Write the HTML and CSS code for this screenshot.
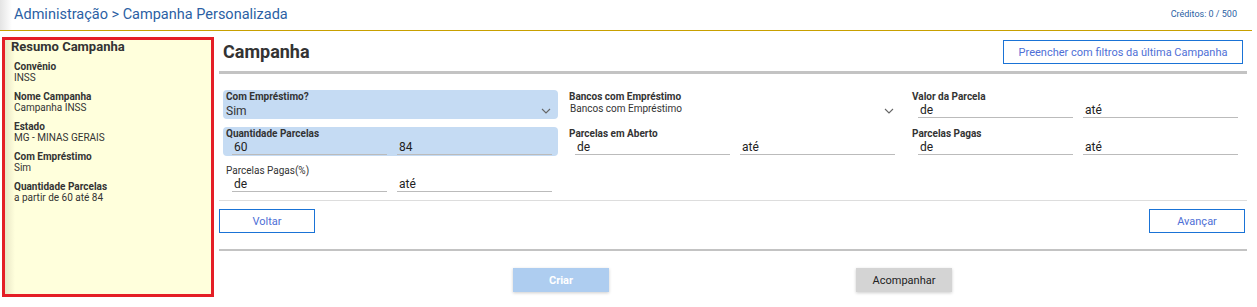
FILE: index.html
```html
<!DOCTYPE html>
<html lang="pt-BR">
<head>
  <meta charset="UTF-8">
  <title>Campanha Personalizada</title>
  <link rel="stylesheet" href="styles.css">
</head>
<body>
  <!-- Barra superior -->
  <div class="topbar">
    <span class="breadcrumb">Administração &gt; Campanha Personalizada</span>
    <span class="creditos">Créditos: 0 / 500</span>
  </div>

  <div class="page">
    <!-- Resumo lateral -->
    <aside class="resumo">
      <h3>Resumo Campanha</h3>
      <div class="resumo-item"><b>Convênio</b><span>INSS</span></div>
      <div class="resumo-item"><b>Nome Campanha</b><span>Campanha INSS</span></div>
      <div class="resumo-item"><b>Estado</b><span>MG - MINAS GERAIS</span></div>
      <div class="resumo-item"><b>Com Empréstimo</b><span>Sim</span></div>
      <div class="resumo-item"><b>Quantidade Parcelas</b><span>a partir de 60 até 84</span></div>
    </aside>

    <main class="main">
      <div class="main-head">
        <h1>Campanha</h1>
        <button class="btn-outline btn-wide">Preencher com filtros da última Campanha</button>
      </div>

      <div class="filtros">
        <div class="field filled">
          <label>Com Empréstimo?</label>
          <div class="select big">Sim
            <svg class="chev" width="10" height="6" viewBox="0 0 10 6"><path d="M1 1l4 4 4-4" fill="none" stroke="#666" stroke-width="1.1"/></svg>
          </div>
        </div>
        <div class="field">
          <label>Bancos com Empréstimo</label>
          <div class="select small">Bancos com Empréstimo
            <svg class="chev" width="10" height="6" viewBox="0 0 10 6"><path d="M1 1l4 4 4-4" fill="none" stroke="#666" stroke-width="1.1"/></svg>
          </div>
        </div>
        <div class="field">
          <label>Valor da Parcela</label>
          <div class="range"><input value="de"><input value="até"></div>
        </div>

        <div class="field filled">
          <label>Quantidade Parcelas</label>
          <div class="range"><input value="60"><input value="84"></div>
        </div>
        <div class="field">
          <label>Parcelas em Aberto</label>
          <div class="range"><input value="de"><input value="até"></div>
        </div>
        <div class="field">
          <label>Parcelas Pagas</label>
          <div class="range"><input value="de"><input value="até"></div>
        </div>

        <div class="field">
          <label class="normal">Parcelas Pagas(%)</label>
          <div class="range"><input value="de"><input value="até"></div>
        </div>
      </div>

      <div class="nav-row">
        <button class="btn-outline">Voltar</button>
        <button class="btn-outline">Avançar</button>
      </div>

      <div class="acoes">
        <button class="btn-criar">Criar</button>
        <button class="btn-acomp">Acompanhar</button>
      </div>
    </main>
  </div>
</body>
</html>
```

FILE: styles.css
```css
body {
  margin: 0;
  font-family: Roboto, "Liberation Sans", sans-serif;
  background: #fff;
  color: #333;
  width: 1252px;
}

/* Barra superior */
.topbar {
  height: 30px;
  display: flex;
  justify-content: space-between;
  align-items: center;
  padding: 0 15px 0 14px;
  border-bottom: 1px solid #c8a000;
  background: linear-gradient(to right, #e4e4e4, #fff 12px);
}

.breadcrumb {
  font-size: 14.5px;
  color: #2b5fa4;
  margin-top: -2px;
}

.creditos {
  font-size: 9px;
  color: #2b5fa4;
  margin-top: -3px;
}

.page {
  display: flex;
  padding-top: 6px;
}

/* Resumo lateral */
.resumo {
  margin-left: 2px;
  width: 206px;
  height: 254px;
  border: 3px solid #e41e26;
  background: linear-gradient(to right, #e9e7c6, #ffffdc 10px);
}

.resumo h3 {
  margin: 0;
  padding: 0 0 4px 6px;
  font-size: 13px;
  line-height: 14px;
  color: #333;
}

.resumo-item {
  display: flex;
  flex-direction: column;
  padding: 3px 0 5px 9px;
  font-size: 10px;
  line-height: 11px;
  color: #333;
}

.resumo-item b {
  font-weight: bold;
}

/* Conteúdo */
.main {
  margin-left: 5px;
  width: 1028px;
}

.main-head {
  height: 28px;
  display: flex;
  justify-content: space-between;
  align-items: center;
  padding: 0 4px 6px 4px;
  border-bottom: 3px solid #c3c3c3;
}

.main-head h1 {
  margin: 0;
  font-size: 18px;
  color: #333;
}

.btn-outline {
  height: 24px;
  width: 96px;
  background: #fff;
  border: 1px solid #1a73d6;
  color: #4e6fd6;
  font-family: Roboto, "Liberation Sans", sans-serif;
  font-size: 11px;
  cursor: pointer;
}

.btn-wide {
  width: 240px;
  margin-top: 2px;
}

.filtros {
  display: grid;
  grid-template-columns: repeat(3, 335px);
  column-gap: 8px;
  row-gap: 8px;
  padding: 16px 4px 0 4px;
}

.field {
  height: 29px;
  padding-top: 1px;
  box-sizing: border-box;
}

.field.filled {
  background: #c5dbf3;
  border-radius: 4px;
}

.field label {
  display: block;
  font-size: 10px;
  font-weight: bold;
  line-height: 12px;
  padding-left: 3px;
  color: #333;
}

.field label.normal {
  font-weight: normal;
}

.select {
  position: relative;
  padding-left: 3px;
  color: #333;
}

.select.big {
  font-size: 12px;
  line-height: 16px;
}

.select.small {
  font-size: 10px;
  line-height: 12px;
  padding-left: 4px;
}

.chev {
  position: absolute;
  right: 7px;
  top: 5px;
}

.range {
  display: flex;
  gap: 10px;
  padding-left: 9px;
}

.range input {
  width: 155px;
  height: 15px;
  box-sizing: border-box;
  border: none;
  border-bottom: 1px solid #bbb;
  background: transparent;
  padding: 0 2px;
  font-family: Roboto, "Liberation Sans", sans-serif;
  font-size: 12px;
  color: #222;
  outline: none;
}

.nav-row {
  display: flex;
  justify-content: space-between;
  margin-top: 7px;
  padding: 8px 2px 16px 0;
  border-top: 1px solid #ddd;
  border-bottom: 2px solid #c3c3c3;
}

.acoes {
  display: flex;
  padding: 17px 0 0 294px;
  gap: 247px;
}

.btn-criar,
.btn-acomp {
  width: 96px;
  height: 24px;
  border: none;
  font-family: Roboto, "Liberation Sans", sans-serif;
  font-size: 11px;
  box-shadow: 0 1px 3px rgba(0, 0, 0, 0.2);
}

.btn-criar {
  background: #aecdf0;
  color: #fff;
  font-weight: bold;
}

.btn-acomp {
  background: #d4d4d4;
  color: #222;
}
```
